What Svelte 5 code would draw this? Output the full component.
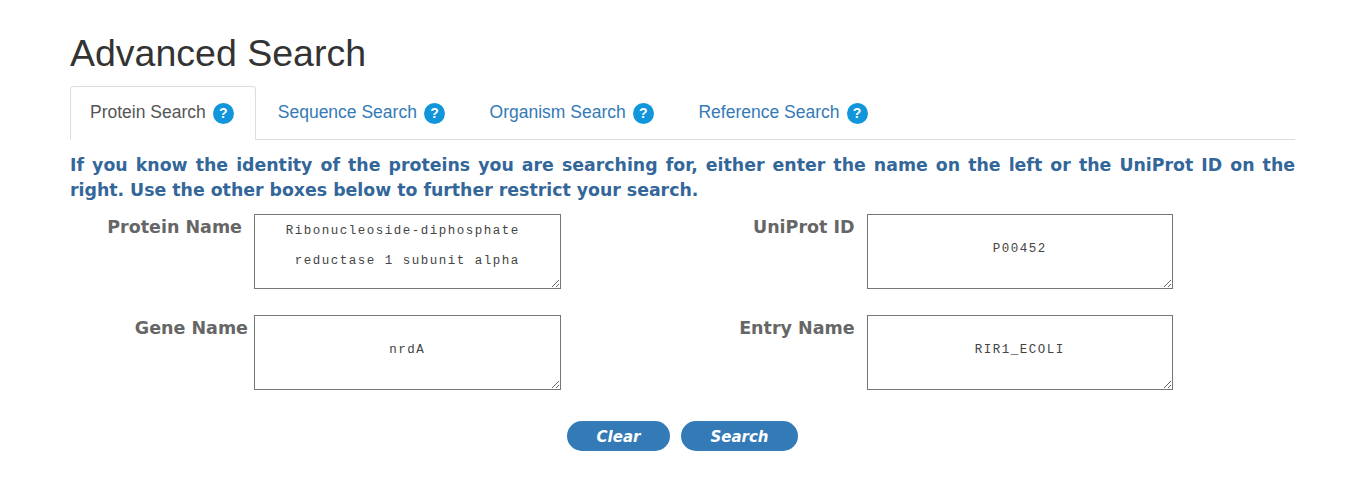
<script>
  const tabs = ['Protein Search', 'Sequence Search', 'Organism Search', 'Reference Search'];
  const fields = [
    { label: 'Protein Name', value: 'Ribonucleoside-diphosphate \nreductase 1 subunit alpha', cls: 'tall padded' },
    { label: 'UniProt ID', value: 'P00452', cls: 'padded' },
    { label: 'Gene Name', value: 'nrdA', cls: '' },
    { label: 'Entry Name', value: 'RIR1_ECOLI', cls: 'padded' }
  ];
</script>

<main class="page">
  <h1>Advanced Search</h1>

  <ul class="tabs">
    {#each tabs as tab, i}
      <li class:active={i === 0}>
        <a href="#{i}">{tab}<span class="help">?</span></a>
      </li>
    {/each}
  </ul>

  <p class="intro">If you know the identity of the proteins you are searching for, either enter the name on the left or the UniProt ID on the right. Use the other boxes below to further restrict your search.</p>

  <form class="fields">
    {#each fields as field}
      <div class="field {field.cls}">
        <label for={field.label}>{field.label}</label>
        <textarea id={field.label} spellcheck="false" value={field.value}></textarea>
      </div>
    {/each}
  </form>

  <div class="actions">
    <button type="button" class="clear">Clear</button>
    <button type="button" class="search">Search</button>
  </div>
</main>

<style>
  :global(body) {
    margin: 0;
    background: #fff;
    font-family: "Liberation Sans", Arial, sans-serif;
  }

  .page {
    width: 1225px;
    padding: 0 63px 0 70px;
  }

  h1 {
    margin: 0;
    padding-top: 33px;
    font-size: 37.5px;
    line-height: 40px;
    font-weight: 400;
    color: #333;
  }

  .tabs {
    display: flex;
    list-style: none;
    margin: 13px 0 0;
    padding: 0;
    height: 53px;
    border-bottom: 1px solid #ddd;
  }

  .tabs li {
    margin-right: 2px;
  }

  .tabs li.active {
    margin-right: 0;
  }

  .tabs a {
    display: flex;
    align-items: center;
    height: 50px;
    padding: 0 19.7px 2px 21px;
    border: 1px solid transparent;
    border-radius: 4px 4px 0 0;
    font-size: 17.5px;
    color: #337ab7;
    text-decoration: none;
  }

  .tabs .active a {
    padding: 0 21px 2px 19px;
    border-color: #ddd;
    border-bottom-color: #fff;
    background: #fff;
    color: #555;
  }

  .help {
    display: inline-grid;
    place-items: center;
    width: 21px;
    height: 21px;
    margin: 2px 0 0 7px;
    border-radius: 50%;
    background: #1296db;
    color: #fff;
    font-size: 14px;
    font-weight: 700;
  }

  .intro {
    margin: 13px 0 0;
    font-family: "DejaVu Sans", sans-serif;
    font-size: 17.33px;
    line-height: 25px;
    font-weight: 700;
    color: #336699;
    text-align: justify;
  }

  .fields {
    display: grid;
    grid-template-columns: 612.6px 1fr;
    row-gap: 26px;
    margin-top: 11px;
  }

  .field {
    display: grid;
    grid-template-columns: 178px 306.5px;
    column-gap: 6px;
  }

  .field.padded label {
    padding-right: 6px;
  }

  label {
    padding-top: 2px;
    font-family: "DejaVu Sans", sans-serif;
    font-size: 17.5px;
    line-height: 22px;
    font-weight: 700;
    color: #666;
    text-align: right;
  }

  textarea {
    box-sizing: border-box;
    width: 100%;
    height: 75px;
    margin: 0;
    padding: 25px 8px 0;
    border: 1px solid #767676;
    border-radius: 0;
    outline: none;
    font-family: "Liberation Mono", monospace;
    font-size: 12.5px;
    line-height: 18px;
    letter-spacing: 1.5px;
    color: #444;
    text-align: center;
  }

  .tall textarea {
    padding-top: 1px;
    line-height: 30px;
  }

  .actions {
    display: flex;
    justify-content: center;
    gap: 11px;
    margin-top: 31px;
  }

  button {
    height: 30px;
    padding: 2px 0 0;
    border: 0;
    border-radius: 15px;
    background: #337ab7;
    color: #fff;
    font-family: "DejaVu Sans", sans-serif;
    font-size: 15px;
    font-weight: 700;
    font-style: italic;
  }

  .clear {
    width: 103px;
  }

  .search {
    width: 117px;
  }
</style>
